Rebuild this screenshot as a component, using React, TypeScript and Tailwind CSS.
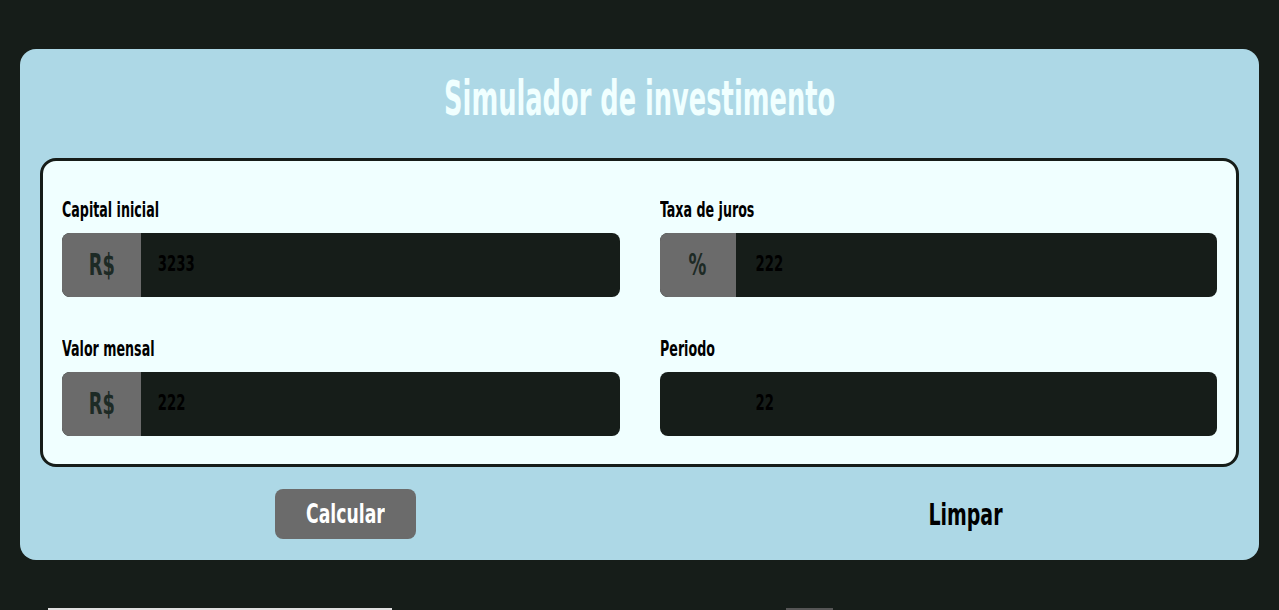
import React, { useState } from 'react';

const font = { fontFamily: '"DejaVu Sans Condensed", "DejaVu Sans", sans-serif' };

type FieldProps = {
  label: string;
  prefix?: string;
  prefixWidth: string;
  inputPad: string;
  value: string;
};

const Field: React.FC<FieldProps> = ({ label, prefix, prefixWidth, inputPad, value }) => {
  const [val, setVal] = useState(value);
  return (
    <div className="flex flex-col">
      <label className="h-[26px] whitespace-nowrap text-[22px] font-bold leading-[26px] text-black">
        <span className="inline-block origin-left scale-x-[0.64]">{label}</span>
      </label>
      <div className="mt-[10px] flex h-[64px] overflow-hidden rounded-lg bg-[#161d19]">
        <div
          className={`${prefixWidth} flex shrink-0 items-center justify-center text-[30px] font-bold leading-none ${
            prefix ? 'bg-[#6b6b6b] text-[#1d2a25]' : 'bg-transparent'
          }`}
        >
          <span className="inline-block scale-x-[0.66]">{prefix}</span>
        </div>
        <input
          value={val}
          onChange={(e) => setVal(e.target.value)}
          className={`${inputPad} min-w-0 flex-1 origin-left scale-x-[0.7] bg-transparent text-[21px] font-bold text-black outline-none`}
          style={font}
        />
      </div>
    </div>
  );
};

export default function App() {
  return (
    <div className="min-h-screen bg-[#161d19] px-[20px] pt-[49px]" style={font}>
      <div className="rounded-[16px] bg-[#add8e6] px-[20px] pb-[21px] pt-[21px]">
        <h1 className="whitespace-nowrap text-center text-[48px] font-bold leading-[56px] text-[#f0ffff]">
          <span className="inline-block scale-x-[0.595]">Simulador de investimento</span>
        </h1>
        <div className="mt-[32px] rounded-[16px] border-[3px] border-[#161d19] bg-[#f0ffff] px-[19px] pb-[28px] pt-[36px]">
          <div className="grid grid-cols-2 gap-x-[40px] gap-y-[39px]">
            <Field label="Capital inicial" prefix="R$" prefixWidth="w-[79px]" inputPad="pl-[24px]" value="3233" />
            <Field label="Taxa de juros" prefix="%" prefixWidth="w-[76px]" inputPad="pl-[28px]" value="222" />
            <Field label="Valor mensal" prefix="R$" prefixWidth="w-[79px]" inputPad="pl-[24px]" value="222" />
            <Field label="Periodo" prefixWidth="w-[76px]" inputPad="pl-[28px]" value="22" />
          </div>
        </div>
        <div className="-mx-[20px] mt-[22px] flex items-center justify-around">
          <button className="flex h-[50px] w-[141px] items-center justify-center whitespace-nowrap rounded-lg bg-[#6b6b6b] text-[27px] font-bold text-white">
            <span className="inline-block scale-x-[0.71]">Calcular</span>
          </button>
          <button className="flex h-[50px] w-[77px] items-center justify-center whitespace-nowrap text-[31px] font-bold text-black">
            <span className="inline-block scale-x-[0.68]">Limpar</span>
          </button>
        </div>
      </div>
      <div className="mt-[48px] flex">
        <div className="ml-[28px] h-[20px] w-[344px] bg-[#e0e0e0]" />
        <div className="ml-[394px] h-[20px] w-[47px] bg-[#555555]" />
      </div>
    </div>
  );
}
